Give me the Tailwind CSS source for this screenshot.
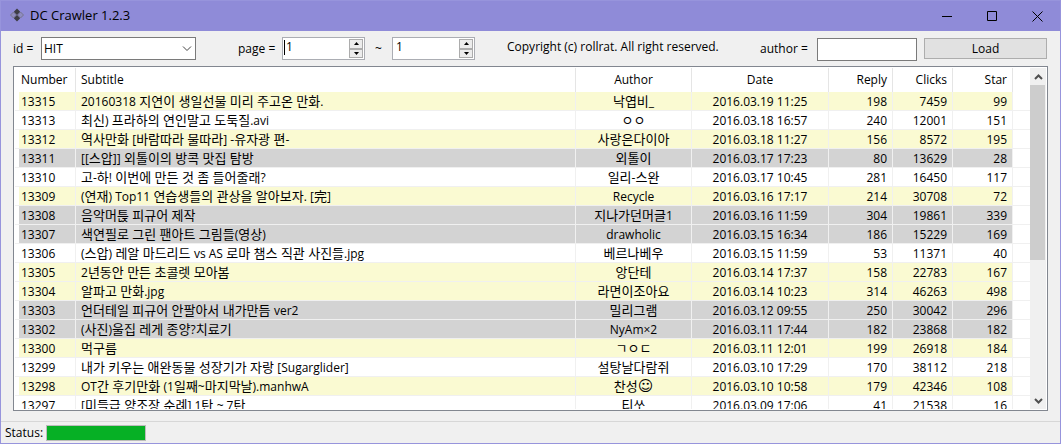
<!DOCTYPE html>
<html lang="ko">
<head>
<meta charset="utf-8">
<title>DC Crawler 1.2.3</title>
<script src="https://cdn.jsdelivr.net/npm/@tailwindcss/browser@4"></script>
</head>
<body class="font-['Open_Sans','Noto_Sans_CJK_KR',sans-serif] text-xs text-black">
<div class="flex h-screen flex-col overflow-hidden border border-[#9794dc] bg-[#f0f0f0]">
  <header class="flex h-[30px] shrink-0 items-center bg-[#8f8bd8] pl-2">
    <svg class="size-4" viewBox="0 0 16 16" aria-hidden="true">
      <path d="M4.500 4 1.500 7l3 3 3-3zM11.500 4l-3 3 3 3 3-3z" fill="#8f8cc0" stroke="#77758f"/>
      <path d="M8 .5l3.200 3.200L8 6.900 4.800 3.700zM8 7.100l3.200 3.200L8 13.500l-3.200-3.200z" fill="#3d3d45"/>
    </svg>
    <h1 class="ml-[5px] flex-1 text-[13px]">DC Crawler 1.2.3</h1>
    <button class="flex h-full w-[45px] items-center justify-center" aria-label="Minimize"><svg class="size-[11px]" viewBox="0 0 11 11" stroke="#000"><path d="M0 5.500h10"/></svg></button>
    <button class="flex h-full w-[45px] items-center justify-center" aria-label="Maximize"><svg class="size-[11px]" viewBox="0 0 11 11" stroke="#000" fill="none"><path d="M.5.5h9v9h-9z"/></svg></button>
    <button class="flex h-full w-[45px] items-center justify-center" aria-label="Close"><svg class="size-[11px]" viewBox="0 0 11 11" stroke="#000"><path d="M.5.5l10 10M10.500.5l-10 10"/></svg></button>
  </header>

  <form class="flex h-[35px] shrink-0 items-center pl-3 pr-[13px]">
    <label for="board" class="w-7 whitespace-nowrap">id =</label>
    <div class="relative">
      <select id="board" class="block h-[23px] w-[155px] appearance-none border border-[#7a7a7a] bg-white px-0.5 text-xs"><option>HIT</option></select>
      <svg class="pointer-events-none absolute right-1 top-2 h-2 w-[10px]" viewBox="0 0 10 8" fill="none" stroke="#444"><path d="M1 1.500l4 4 4-4"/></svg>
    </div>
    <label for="from" class="ml-[42px] w-11 whitespace-nowrap">page =</label>
    <div class="relative flex h-[23px] w-[83px] border border-[#abadb3] bg-white p-px">
      <input id="from" value="1" class="min-w-0 flex-1 pb-1 pl-0.5 outline-none">
      <span class="absolute left-px top-0.5 h-[15px] w-px bg-black"></span>
      <span class="flex h-[19px] w-[14px] flex-col">
        <button type="button" aria-label="Increase" class="flex flex-1 items-center justify-center border border-[#acacac] bg-[#ececec]"><svg class="h-[3px] w-[5px]" viewBox="0 0 5 3"><path d="M2.500 0 5 3H0z"/></svg></button>
        <button type="button" aria-label="Decrease" class="flex flex-1 items-center justify-center border border-[#acacac] bg-[#ececec]"><svg class="h-[3px] w-[5px]" viewBox="0 0 5 3"><path d="M2.500 3 5 0H0z"/></svg></button>
      </span>
    </div>
    <label for="to" class="w-[27px] text-center">~</label>
    <div class="flex h-[23px] w-[83px] border border-[#abadb3] bg-white p-px">
      <input id="to" value="1" class="min-w-0 flex-1 pb-1 pl-0.5 outline-none">
      <span class="flex h-[19px] w-[14px] flex-col">
        <button type="button" aria-label="Increase" class="flex flex-1 items-center justify-center border border-[#acacac] bg-[#ececec]"><svg class="h-[3px] w-[5px]" viewBox="0 0 5 3"><path d="M2.500 0 5 3H0z"/></svg></button>
        <button type="button" aria-label="Decrease" class="flex flex-1 items-center justify-center border border-[#acacac] bg-[#ececec]"><svg class="h-[3px] w-[5px]" viewBox="0 0 5 3"><path d="M2.500 3 5 0H0z"/></svg></button>
      </span>
    </div>
    <p class="ml-8 flex-1 whitespace-nowrap pb-1">Copyright (c) rollrat. All right reserved.</p>
    <label for="author" class="w-[57px] whitespace-nowrap">author =</label>
    <input id="author" class="mt-px h-[23px] w-[100px] border border-[#7a7a7a] bg-white px-1">
    <button type="button" class="ml-[7px] h-[21px] w-[123px] border border-[#adadad] bg-[#e1e1e1]">Load</button>
  </form>

  <main class="mx-3 flex min-h-0 flex-1 border border-[#828790] bg-white p-px">
    <div class="min-w-0 flex-1 overflow-y-auto [scrollbar-width:none]">
      <table class="w-full table-fixed border-separate border-spacing-0 whitespace-nowrap">
        <colgroup><col class="w-1"><col class="w-[57px]"><col><col class="w-[116px]"><col class="w-[137px]"><col class="w-16"><col class="w-[60px]"><col class="w-[60px]"><col class="w-[17px]"></colgroup>
        <thead class="sticky top-0 bg-white">
          <tr class="h-6 [&>th]:p-0 [&>th]:font-normal">
            <td></td>
            <th class="border-r border-[#e5e5e5] text-left"><span class="pl-0.5">Number</span></th>
            <th class="border-r border-[#e5e5e5] text-left"><span class="pl-[5px]">Subtitle</span></th>
            <th class="border-r border-[#e5e5e5]">Author</th>
            <th class="border-r border-[#e5e5e5]">Date</th>
            <th class="border-r border-[#e5e5e5] text-right"><span class="pr-[5px]">Reply</span></th>
            <th class="border-r border-[#e5e5e5] text-right"><span class="pr-[5px]">Clicks</span></th>
            <th class="border-r border-[#e5e5e5] text-right"><span class="pr-[5px]">Star</span></th>
            <td></td>
          </tr>
        </thead>
        <tbody id="posts"></tbody>
      </table>
    </div>
    <div class="flex w-4 flex-col bg-[#f0f0f0]">
      <button aria-label="Scroll up" class="flex h-[17px] items-center justify-center"><svg class="h-[6px] w-[9px]" viewBox="0 0 9 6" fill="none" stroke="#505050" stroke-width="2"><path d="M1 5l3.500-3.500L8 5"/></svg></button>
      <div class="flex-1"><div class="mr-px h-[57%] bg-[#cdcdcd]"></div></div>
      <button aria-label="Scroll down" class="flex h-[17px] items-center justify-center"><svg class="h-[6px] w-[9px]" viewBox="0 0 9 6" fill="none" stroke="#505050" stroke-width="2"><path d="M1 1l3.500 3.500L8 1"/></svg></button>
    </div>
  </main>

  <footer class="mt-[10px] flex h-[22px] shrink-0 items-center border-t border-[#d7d7d7] pl-1">
    <span id="status" class="w-[41px]">Status:</span>
    <div role="progressbar" aria-labelledby="status" aria-valuenow="100" class="h-4 w-[100px] border border-[#bcbcbc] bg-[#06b025]"></div>
  </footer>
</div>
<script>
const fills = { y: 'bg-[#fafad2]', g: 'bg-[#d3d3d3]', w: 'bg-white' };
const posts = [
  ['y', '13315', '20160318 지연이 생일선물 미리 주고온 만화.', '낙엽비_', '2016.03.19 11:25', 198, 7459, 99],
  ['w', '13313', '최신) 프라하의 연인말고 도둑질.avi', 'ㅇㅇ', '2016.03.18 16:57', 240, 12001, 151],
  ['y', '13312', '역사만화 [바람따라 물따라] -유자광 편-', '사랑은다이아', '2016.03.18 11:27', 156, 8572, 195],
  ['g', '13311', '[[스압]] 외톨이의 방콕 맛집 탐방', '외톨이', '2016.03.17 17:23', 80, 13629, 28],
  ['w', '13310', '고-하! 이번에 만든 것 좀 들어줄래?', '일리-스완', '2016.03.17 10:45', 281, 16450, 117],
  ['y', '13309', '(연재) Top11 연습생들의 관상을 알아보자. [完]', 'Recycle', '2016.03.16 17:17', 214, 30708, 72],
  ['g', '13308', '음악머튽 피규어 제작', '지나가던머글1', '2016.03.16 11:59', 304, 19861, 339],
  ['g', '13307', '색연필로 그린 팬아트 그림들(영상)', 'drawholic', '2016.03.15 16:34', 186, 15229, 169],
  ['w', '13306', '(스압) 레알 마드리드 vs AS 로마 챔스 직관 사진들.jpg', '베르나베우', '2016.03.15 11:59', 53, 11371, 40],
  ['y', '13305', '2년동안 만든 초콜렛 모아봄', '앙단테', '2016.03.14 17:37', 158, 22783, 167],
  ['y', '13304', '알파고 만화.jpg', '라면이조아요', '2016.03.14 10:23', 314, 46263, 498],
  ['g', '13303', '언더테일 피규어 안팔아서 내가만듬 ver2', '밀리그램', '2016.03.12 09:55', 250, 30042, 296],
  ['g', '13302', '(사진)울집 레게 종양?치료기', 'NyAm×2', '2016.03.11 17:44', 182, 23868, 182],
  ['y', '13300', '먹구름', 'ㄱㅇㄷ', '2016.03.11 12:01', 199, 26918, 184],
  ['w', '13299', '내가 키우는 애완동물 성장기가 자랑 [Sugarglider]', '설탕날다람쥐', '2016.03.10 17:29', 170, 38112, 218],
  ['y', '13298', 'OT간 후기만화 (1일째~마지막날).manhwA', '찬성☺', '2016.03.10 10:58', 179, 42346, 108],
  ['w', '13297', '[미들급 양조장 순례] 1탄 ~ 7탄', '티쏘', '2016.03.09 17:06', 41, 21538, 16],
];
// Hangul and Hanja runs are set one step larger than the Latin text around them.
const mixed = s => s
  .replace(/ ?[\u3131-\u318e\u4e00-\u9fff\uac00-\ud7a3][ \u3131-\u318e\u4e00-\u9fff\uac00-\ud7a3]*/g, '<span class="text-[13px] leading-none">$&</span>')
  .replace('☺', `<span class="font-['DejaVu_Sans'] text-[15px] leading-none">☺</span>`);
const aligns = ['text-left pl-0.5', 'text-left pl-[5px]', 'text-center', 'text-center', 'text-right pr-[5px]', 'text-right pr-[5px]', 'text-right pr-[5px]'];
document.getElementById('posts').innerHTML = posts.map(([fill, ...cells]) =>
  '<tr class="h-[19px] leading-4"><td class="border-b border-[#f0f0f0] p-0"></td>' +
  cells.map((c, i) => `<td class="overflow-hidden border-b border-r border-[#f0f0f0] pb-0 pt-0.5 ${fills[fill]} ${aligns[i]}">${mixed(String(c))}</td>`).join('') +
  '<td class="border-b border-[#f0f0f0] p-0"></td></tr>').join('');
</script>
</body>
</html>
